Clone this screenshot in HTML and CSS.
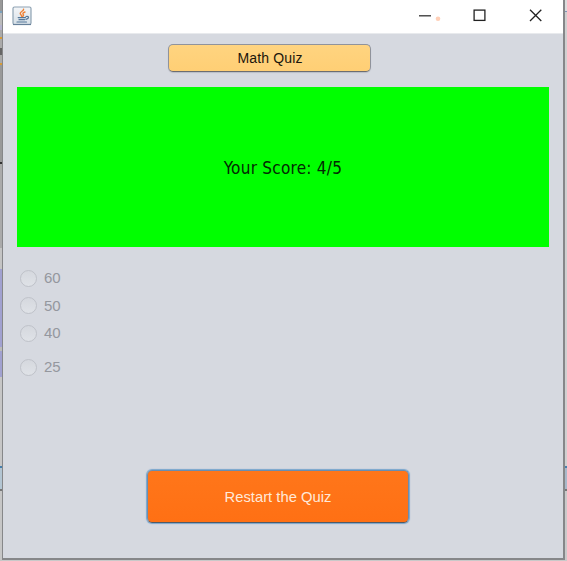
FILE: index.html
```html
<!DOCTYPE html>
<html lang="en">
<head>
<meta charset="utf-8">
<title>Math Quiz</title>
<link rel="stylesheet" href="styles.css">
</head>
<body>
<div class="desktop">
<div class="edge edge-left"></div>
<main class="window">
  <header class="titlebar">
    <svg class="java" width="20" height="20" viewBox="0 0 20 20">
      <defs><linearGradient id="tile" x2="0" y2="1"><stop offset="0" stop-color="#f4f6f8"/><stop offset="1" stop-color="#d5dfe7"/></linearGradient></defs>
      <rect x="1" y="1" width="18" height="17.5" rx="1.5" fill="url(#tile)" stroke="#8ea2b3" stroke-width="1.2"/>
      <path d="M1 18.5H19" stroke="#66809a" stroke-width="1.2"/>
      <g fill="none" stroke-linecap="round">
        <path d="M11.6 3.2C12 5 8 5.5 8.2 7.5C8.3 8.7 9.8 9 9.6 10.4M13 6C10.5 7 10.5 7.8 11.4 8.7C11.8 9.3 11.3 10 10.7 10.4" stroke="#ee8136" stroke-width="1.4"/>
        <path d="M6.2 11.6H13.5M7 13.7H12.5M5 16H14.5M14 10.5C17.4 9.7 17.3 12.7 14 13.3" stroke="#55789a" stroke-width="1.2"/>
      </g>
    </svg>
    <div class="controls">
      <svg width="147" height="33" viewBox="0 0 147 33" fill="none">
        <path d="M3 15.8H15" stroke="#333" stroke-width="1.3"/>
        <circle cx="22" cy="18.8" r="2.3" fill="#ffd0b8"/>
        <rect x="58.1" y="10.1" width="10.8" height="10.3" stroke="#222" stroke-width="1.3"/>
        <path d="M114 9.8L125.3 21M125.3 9.8L114 21" stroke="#222" stroke-width="1.3"/>
      </svg>
    </div>
  </header>
  <h1 class="heading">Math Quiz</h1>
  <section class="score"><span>Your Score: 4/5</span></section>
  <div class="options">
    <label class="option"><i class="radio"></i>60</label>
    <label class="option"><i class="radio"></i>50</label>
    <label class="option"><i class="radio"></i>40</label>
    <label class="option last"><i class="radio"></i>25</label>
  </div>
  <button class="restart"><span>Restart the Quiz</span></button>
</main>
<div class="edge edge-right"></div>
</div>
</body>
</html>
```

FILE: styles.css
```css
* { box-sizing: border-box; }
body { margin: 0; background: #ccc; font-family: "Liberation Sans", Arial, sans-serif; overflow: hidden; }
.desktop { display: flex; width: 567px; height: 561px; background: #c9c9c9; }
.edge { height: 561px; flex: none; }
.edge-left {
  width: 2px;
  background: linear-gradient(#999 0 11px, #7ba1bc 11px 13px, #bbb 13px 25px, #b5b3cc 25px 30px, #aaa 30px 37px, #d69b37 37px 39px, #aaa 39px 48px, #666 48px 55px, #aaa 55px 63px, #d69b37 63px 65px, #999 65px 162px, #333 162px 164px, #aaa 164px 248px, #c4c4c4 248px 269px, #a1a1d0 269px 347px, #bbb 347px 351px, #a1a1d0 351px 377px, #c6c6c6 377px 466px, #477fac 466px 468px, #b3c5d2 468px 489px, #777 489px 491px, #c6c6c6 491px);
}
.edge-right {
  width: 2px;
  background: linear-gradient(#ddd 0 11px, #8193b5 11px 12px, #d0d0d0 12px 466px, #477fac 466px 468px, #a9b9ca 468px 489px, #777 489px 491px, #cacaca 491px);
}
.window {
  display: flex;
  flex-direction: column;
  width: 563px;
  height: 560px;
  border: solid #868789;
  border-width: 0 2px 2px 1px;
  background: #d6d9e0;
}
.titlebar {
  display: flex;
  flex: none;
  justify-content: space-between;
  height: 34px;
  background: #fff;
  border-bottom: 1px solid #e8eaed;
}
.java { margin: 6px 0 0 9px; }
.controls { width: 147px; height: 33px; }
.heading {
  flex: none;
  width: 203px;
  height: 28px;
  margin: 10px 0 0 165px;
  border: 1px solid #90939b;
  border-bottom-color: #6c6d71;
  border-radius: 5px;
  background: linear-gradient(#ffd480, #ffcf75);
  box-shadow: 0 1px 1px #b9bdc6;
  text-align: center;
  font-size: 14px;
  letter-spacing: 0.15px;
  text-indent: 1px;
  font-weight: 400;
  line-height: 27px;
  color: #1b160c;
}
.score {
  flex: none;
  width: 532px;
  height: 160px;
  margin: 15px 0 0 14px;
  background: #0f0;
  text-align: center;
  font-family: "DejaVu Sans Condensed", "DejaVu Sans", sans-serif;
  font-stretch: condensed;
  font-size: 17px;
  letter-spacing: 0.25px;
  line-height: 162px;
  color: #042804;
}
.options {
  display: flex;
  flex-direction: column;
  margin: 17.5px 0 0 17px;
}
.option {
  display: flex;
  align-items: center;
  gap: 7px;
  height: 27.5px;
  font-size: 15px;
  line-height: 18px;
  color: #94979e;
}
.last { margin-top: 6.5px; }
.radio {
  width: 17px;
  height: 17px;
  border: 1px solid #bfc2c9;
  border-radius: 50%;
  background: linear-gradient(#d5d8de, #dfe2e7);
}
.restart {
  flex: none;
  width: 262px;
  height: 53px;
  margin: 89px 0 0 144px;
  padding: 0;
  border: 1px solid #6a8db0;
  border-bottom-color: #515b66;
  border-radius: 5px;
  background: linear-gradient(#ff761a, #ff7014);
  box-shadow: 0 0 1px 1px #78a5cd;
  font-family: "Liberation Sans", Arial, sans-serif;
  font-size: 14.8px;
  color: #ffe9d9;
}
```
